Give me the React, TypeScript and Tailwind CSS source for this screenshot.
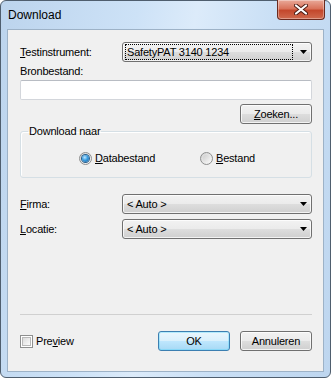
import React from "react";

function Arrow() {
  return (
    <svg width="7" height="4" viewBox="0 0 7 4">
      <path d="M0 0h7L3.5 4z" fill="#000" />
    </svg>
  );
}

function Combo({ value, focused = false }: { value: string; focused?: boolean }) {
  return (
    <div className="flex h-[20px] w-[190px] items-center rounded-[3px] border border-[#707070] bg-[linear-gradient(to_bottom,#f2f2f2_0%,#ebebeb_48%,#dddddd_52%,#cfcfcf_100%)] shadow-[inset_0_0_0_1px_rgba(255,255,255,0.75)]">
      <div
        className={`ml-[2px] flex h-[16px] w-[168px] items-center pl-[1px] leading-[14px] ${
          focused ? "border border-dotted border-black" : "border border-transparent"
        }`}
      >
        {value}
      </div>
      <div className="ml-auto mr-[4px] flex items-center">
        <Arrow />
      </div>
    </div>
  );
}

function Button({ children, primary = false }: { children: React.ReactNode; primary?: boolean }) {
  return (
    <div
      className={`flex h-[20px] w-[72px] items-center justify-center rounded-[3px] border leading-[14px] ${
        primary
          ? "border-[#3c7fb1] bg-[linear-gradient(to_bottom,#eaf6fd_0%,#d9f0fc_48%,#bee6fd_52%,#a7d9f5_100%)] shadow-[inset_0_0_0_1px_#48d4fb55]"
          : "border-[#707070] bg-[linear-gradient(to_bottom,#f2f2f2_0%,#ebebeb_48%,#dddddd_52%,#cfcfcf_100%)] shadow-[inset_0_0_0_1px_rgba(255,255,255,0.75)]"
      }`}
    >
      {children}
    </div>
  );
}

function Radio({ checked }: { checked: boolean }) {
  return (
    <div className="flex h-[13px] w-[13px] items-center justify-center rounded-full border border-[#8e8f8f] bg-[linear-gradient(135deg,#d2d2d2,#fafafa)]">
      <div
        className={`h-[7px] w-[7px] rounded-full ${
          checked
            ? "bg-[radial-gradient(circle_at_40%_35%,#bde6ff_0%,#3a9de0_45%,#1b5d9a_100%)] shadow-[0_0_0_1px_#2a5e8a]"
            : "bg-[linear-gradient(135deg,#cfcfcf,#f4f4f4)]"
        }`}
      />
    </div>
  );
}

function Checkbox() {
  return (
    <div className="flex h-[13px] w-[13px] items-center justify-center border border-[#8e8f8f] bg-white">
      <div className="h-[9px] w-[9px] border border-[#b9b9b9] bg-[linear-gradient(135deg,#dcdcdc,#fbfbfb)]" />
    </div>
  );
}

export default function App() {
  return (
    <div className="h-[378px] w-[331px] bg-white font-['Liberation_Sans',Arial,sans-serif] text-black">
      <div className="flex h-[378px] w-[331px] flex-col rounded-[6px] border border-[#4f5e6e] bg-[linear-gradient(100deg,#bcd4ed_0%,#cde2f7_35%,#dcebfa_50%,#c9dff5_70%,#bed6ef_100%)] px-[6px] pb-[5px]">
        {/* title bar */}
        <div className="flex h-[28px] items-start">
          <span className="ml-[1px] mt-[6px] text-[12px] leading-[16px]">Download</span>
          <div className="-mt-px ml-auto mr-[-1px] flex h-[20px] w-[48px] items-center justify-center rounded-b-[4px] border border-t-0 border-[#6b2a1e] bg-[linear-gradient(to_bottom,#e9a999_0%,#d9735b_45%,#c4482c_55%,#cf6a4e_100%)] shadow-[inset_0_0_0_1px_rgba(255,255,255,0.35)]">
            <svg width="14" height="11" viewBox="0 0 14 11">
              <path d="M2 1.5l10 8M12 1.5l-10 8" stroke="#4a1a12" strokeWidth="4" strokeLinecap="round" />
              <path d="M2 1.5l10 8M12 1.5l-10 8" stroke="#fff" strokeWidth="2.2" strokeLinecap="round" />
            </svg>
          </div>
        </div>

        {/* client area */}
        <div className="flex flex-1 flex-col border border-[#9db2c7] bg-[#f0f0f0] pl-[12px] pr-[11px] pt-[12px] text-[11px] tracking-[-0.2px]">
          <div className="flex h-[20px] items-center">
            <span className="w-[102px]">
              <span className="underline">T</span>estinstrument:
            </span>
            <Combo value="SafetyPAT 3140 1234" focused />
          </div>

          <div className="mt-[3px] h-[13px] leading-[13px]">Bronbestand:</div>
          <div className="mt-[2px] h-[20px] w-[292px] rounded-[2px] border border-[#d3d6db] border-t-[#b8bcc3] bg-white" />

          <div className="mt-[4px] flex justify-end">
            <Button>
              <span className="underline">Z</span>oeken...
            </Button>
          </div>

          <fieldset className="mt-[1px] w-[292px] rounded-[3px] border border-[#d5dfe5] pb-[12px] shadow-[inset_1px_1px_0_#fff]">
            <legend className="ml-[7px] px-[1px] leading-[13px]">Download naar</legend>
            <div className="mt-[14px] flex h-[13px] items-center pl-[58px]">
              <div className="flex w-[121px] items-center gap-[3px]">
                <Radio checked />
                <span className="leading-[13px]">
                  <span className="underline">D</span>atabestand
                </span>
              </div>
              <div className="flex items-center gap-[3px]">
                <Radio checked={false} />
                <span className="leading-[13px]">
                  <span className="underline">B</span>estand
                </span>
              </div>
            </div>
          </fieldset>

          <div className="mt-[16px] flex h-[20px] items-center">
            <span className="w-[102px]">
              <span className="underline">F</span>irma:
            </span>
            <Combo value="< Auto >" />
          </div>
          <div className="mt-[5px] flex h-[20px] items-center">
            <span className="w-[102px]">
              <span className="underline">L</span>ocatie:
            </span>
            <Combo value="< Auto >" />
          </div>

          <div className="mt-[75px] h-px w-[292px] bg-[#d0d0d0]" />

          <div className="mt-[16px] flex h-[20px] w-[292px] items-center">
            <Checkbox />
            <span className="ml-[3px] leading-[13px]">
              Pre<span className="underline">v</span>iew
            </span>
            <div className="ml-auto flex gap-[10px]">
              <Button primary>OK</Button>
              <Button>Annuleren</Button>
            </div>
          </div>
        </div>
      </div>
    </div>
  );
}
